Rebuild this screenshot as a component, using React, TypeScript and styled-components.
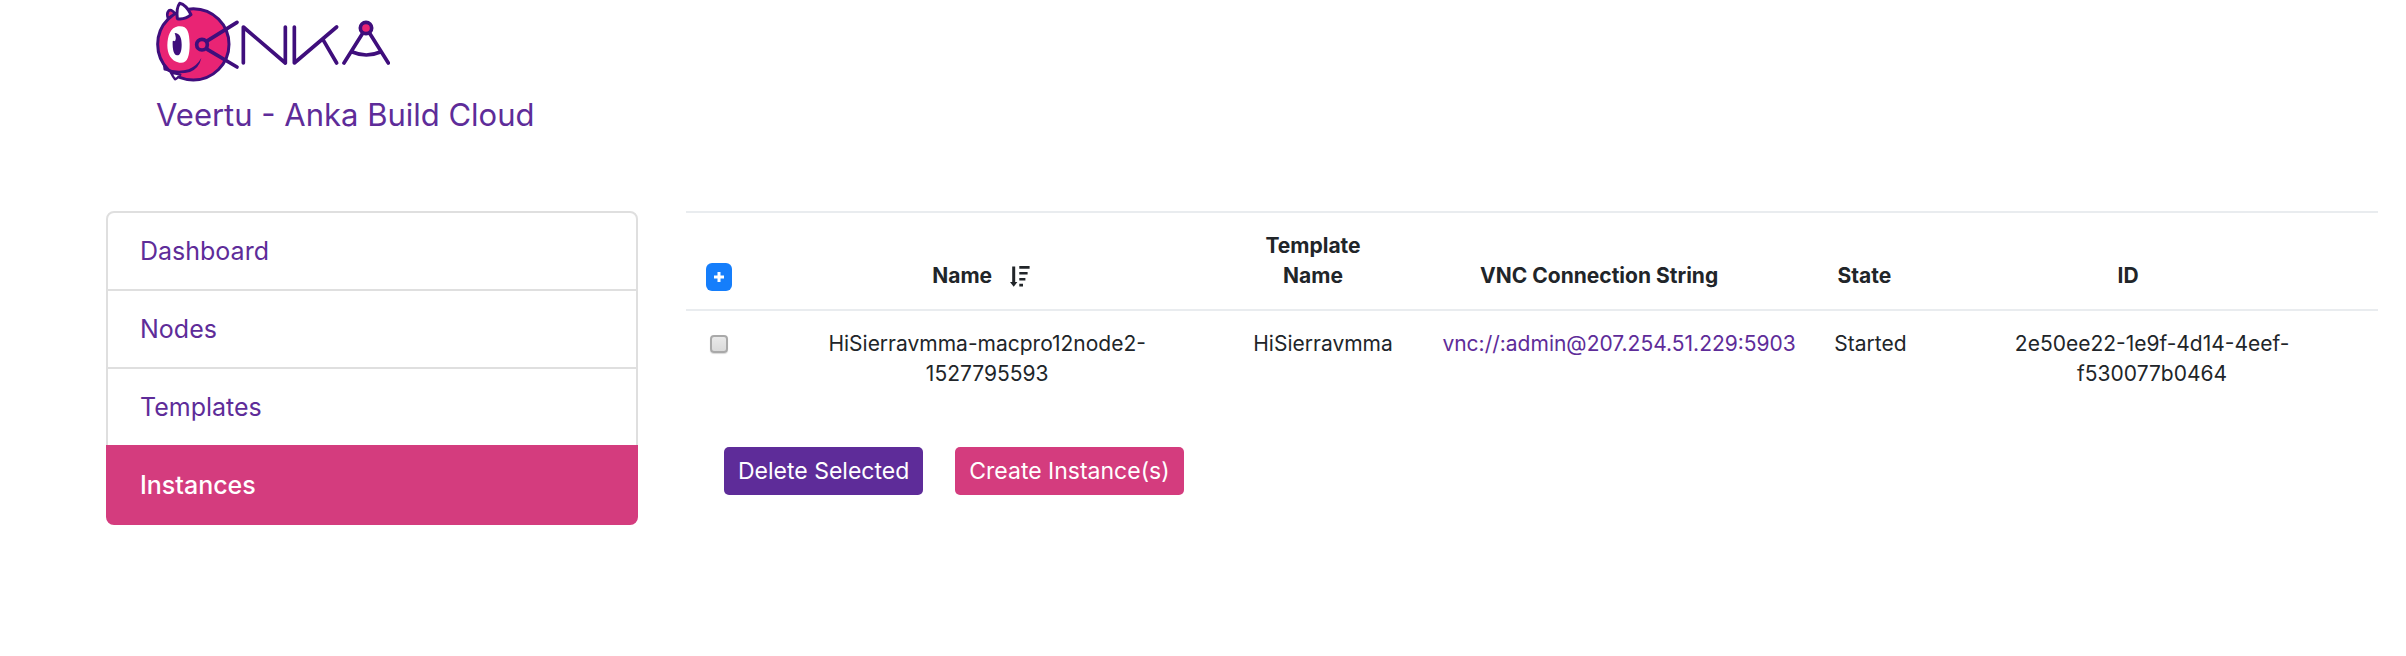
import React from "react";
import styled, { createGlobalStyle } from "styled-components";

const purple = "#5e2c99";
const pink = "#d43c7e";
const ink = "#212529";
const logoInk = "#3f0e7c";
const logoPink = "#e92474";

const GlobalStyle = createGlobalStyle`
  *, *::before, *::after { box-sizing: border-box; }
  body {
    margin: 0;
    background: #fff;
    color: ${ink};
    font-family: Inter, "Liberation Sans", sans-serif;
    font-size: 21px;
    line-height: 30px;
  }
`;

const Header = styled.header`
  padding: 0 28px 0 156px;
`;

const LogoLink = styled.a`
  display: block;
  width: max-content;

  svg { display: block; }
`;

const Title = styled.h1`
  margin: 12px 0 76px;
  color: ${purple};
  font-size: 31px;
  line-height: 40px;
  font-weight: 400;
`;

const Layout = styled.div`
  display: grid;
  grid-template-columns: minmax(0, 532fr) minmax(0, 1692fr);
  align-items: start;
  gap: 48px;
  padding: 0 28px 0 106px;
`;

const Nav = styled.nav`
  display: flex;
  flex-direction: column;
`;

const NavLink = styled.a<{ $active?: boolean }>`
  margin-top: -2px;
  padding: 20px 32px;
  border: 2px solid ${(p) => (p.$active ? pink : "#dfdfdf")};
  background: ${(p) => (p.$active ? pink : "#fff")};
  color: ${(p) => (p.$active ? "#fff" : purple)};
  font-size: 25px;
  font-weight: ${(p) => (p.$active ? 500 : 400)};
  line-height: 36px;
  text-decoration: none;

  &:first-child {
    margin-top: 0;
    border-radius: 8px 8px 0 0;
  }
  &:last-child { border-radius: 0 0 8px 8px; }
`;

const Table = styled.table`
  width: 100%;
  table-layout: fixed;
  border-collapse: separate;
  border-spacing: 0;
  text-align: center;
`;

const Col = styled.col<{ $share: number }>`
  width: ${(p) => p.$share}%;
`;

const HeadCell = styled.th<{ $trail?: number }>`
  padding: 18px ${(p) => 18 + (p.$trail ?? 0)}px 18px 18px;
  border-top: 2px solid #e9ecef;
  font-weight: 700;
  vertical-align: bottom;
`;

const Cell = styled.td<{ $inset?: number }>`
  padding: 18px ${(p) => p.$inset ?? 18}px;
  border-top: 2px solid #e9ecef;
  vertical-align: top;
`;

const SelectAll = styled.button`
  display: flex;
  align-items: center;
  justify-content: center;
  width: 26px;
  height: 28px;
  margin: 0 auto;
  padding: 0;
  border: 0;
  border-radius: 6px;
  background: #157efb;
`;

const SortLabel = styled.span`
  display: flex;
  align-items: center;
  justify-content: center;
  gap: 18px;
`;

const Check = styled.input`
  appearance: none;
  display: block;
  width: 18px;
  height: 18px;
  margin: 6px auto;
  border: 2px solid #a9a9a9;
  border-radius: 4px;
  background: linear-gradient(#e9e9e9, #dadada);
  box-shadow: 0 1px 1px #d8d8d8;
`;

const VncLink = styled.a`
  color: ${purple};
  text-decoration: none;
  white-space: nowrap;
`;

const Actions = styled.div`
  display: flex;
  gap: 32px;
  padding: 40px 38px 0;
`;

const ActionButton = styled.button<{ $color: string }>`
  padding: 6px 14px;
  border: 0;
  border-radius: 5px;
  background: ${(p) => p.$color};
  color: #fff;
  font-family: inherit;
  font-size: 23px;
  font-weight: 400;
  line-height: 36px;
`;

const Logo = () => (
  <svg width="234" height="83" viewBox="48 0 702 249" fill="none" role="img" aria-label="Anka">
    <g stroke={logoInk} strokeLinecap="round" strokeLinejoin="round">
      <path d="M84 54 C78 38 86 28 94 31 Q102 34 106 44 Z" fill={logoPink} strokeWidth="8" />
      <path d="M71 186 L74 208 L92 212 Z" fill={logoInk} strokeWidth="7" />
      <circle cx="160" cy="133" r="107" fill={logoPink} strokeWidth="9" />
      <path d="M93 218 Q100 232 105 238 Q112 236 121 224 Z" fill="#fff" strokeWidth="7" />
      <path d="M112 56 Q108 24 119 10 Q138 14 153 44 Q134 60 112 56 Z" fill="#fff" strokeWidth="9" />
    </g>
    <path d="M114 79 C142 76 148 94 149 132 C149 170 142 192 118 188 C92 184 82 160 82 136 C83 108 90 84 114 79 Z" fill="#fff" />
    <path d="M104 99 C120 100 125 114 125 134 C125 154 120 167 111 166 C102 165 97 150 98 124 Q101 120 105 124 Q110 114 104 99 Z" fill={logoInk} />
    <path d="M76 204 Q112 218 146 208 Q170 198 184 174 Q178 204 150 216 Q116 224 82 214 Z" fill={logoInk} />
    <g stroke={logoInk} strokeWidth="11" strokeLinecap="round" strokeLinejoin="round">
      <path d="M203 122 L291 67 M203 149 L291 201" />
      <circle cx="186" cy="134" r="16" fill={logoPink} />
      <path d="M310 189 V81 L436 189 V81" />
      <path d="M463 81 V189 L590 81 M549 119 L590 189" />
      <path d="M668 100 L612 189 M689 100 L745 189 M637 156 Q679 174 721 156" />
      <circle cx="678" cy="84" r="17" fill={logoPink} />
    </g>
  </svg>
);

const SortIcon = () => (
  <svg width="20" height="21" viewBox="0 0 20 21" fill={ink} aria-hidden="true">
    <path d="M2.2 0.5 H5.2 V16 H7.4 L3.7 20.8 L0 16 H2.2 Z" />
    <path d="M9.3 0 H19.6 V2.8 H9.3 Z M9.3 6 H17.6 V8.6 H9.3 Z M9.3 12 H15.4 V14.6 H9.3 Z M9.3 17.8 H13 V20.4 H9.3 Z" />
  </svg>
);

const navItems = ["Dashboard", "Nodes", "Templates", "Instances"];
const columnShares = [3.9, 27.8, 11.9, 23.1, 6.6, 26.7];

export default function App() {
  return (
    <>
      <GlobalStyle />
      <Header>
        <LogoLink href="#">
          <Logo />
        </LogoLink>
        <Title>Veertu - Anka Build Cloud</Title>
      </Header>
      <Layout>
        <Nav aria-label="Sections">
          {navItems.map((item) => (
            <NavLink key={item} href={`#${item.toLowerCase()}`} $active={item === "Instances"}>
              {item}
            </NavLink>
          ))}
        </Nav>
        <main>
          <Table>
            <colgroup>
              {columnShares.map((share, i) => (
                <Col key={i} $share={share} />
              ))}
            </colgroup>
            <thead>
              <tr>
                <HeadCell>
                  <SelectAll type="button" aria-label="Select all">
                    <svg width="10" height="10" viewBox="0 0 10 10" stroke="#fff" strokeWidth="3" aria-hidden="true">
                      <path d="M5 0 V10 M0 5 H10" />
                    </svg>
                  </SelectAll>
                </HeadCell>
                <HeadCell $trail={12}>
                  <SortLabel>
                    Name
                    <SortIcon />
                  </SortLabel>
                </HeadCell>
                <HeadCell $trail={20}>Template Name</HeadCell>
                <HeadCell $trail={40}>VNC Connection String</HeadCell>
                <HeadCell $trail={12}>State</HeadCell>
                <HeadCell $trail={48}>ID</HeadCell>
              </tr>
            </thead>
            <tbody>
              <tr>
                <Cell>
                  <Check type="checkbox" aria-label="Select HiSierravmma-macpro12node2-1527795593" />
                </Cell>
                <Cell $inset={48}>HiSierravmma-macpro12node2-1527795593</Cell>
                <Cell>HiSierravmma</Cell>
                <Cell>
                  <VncLink href="vnc://:admin@207.254.51.229:5903">vnc://:admin@207.254.51.229:5903</VncLink>
                </Cell>
                <Cell>Started</Cell>
                <Cell $inset={48}>2e50ee22-1e9f-4d14-4eef-f530077b0464</Cell>
              </tr>
            </tbody>
          </Table>
          <Actions>
            <ActionButton type="button" $color={purple}>Delete Selected</ActionButton>
            <ActionButton type="button" $color={pink}>Create Instance(s)</ActionButton>
          </Actions>
        </main>
      </Layout>
    </>
  );
}
